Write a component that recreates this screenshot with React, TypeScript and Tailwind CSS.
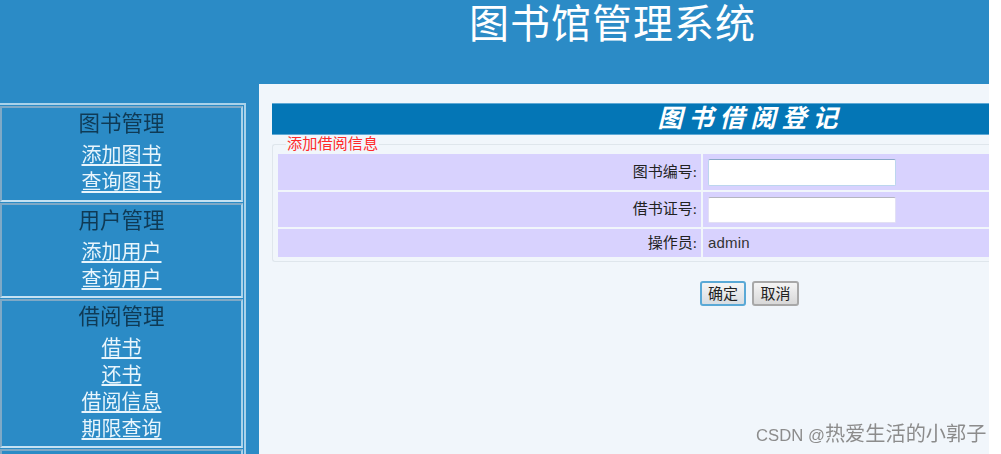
const font = { fontFamily: '"Liberation Serif","Noto Sans CJK SC",serif' };

function Group({ title, links, h }: { title: string; links: string[]; h: string }) {
  return (
    <div className={`${h} border-2 border-t-[#7fa9c6] border-l-[#7fa9c6] border-r-[#a9d2ea] border-b-[#c5e2f3] flex flex-col items-center pt-[2px] shrink-0`}>
      <div className="text-[21.5px] leading-[28px] text-[#0f3a55] mb-[4px]">{title}</div>
      {links.map((l) => (
        <a key={l} className="text-[20px] leading-[27px] text-[#e8f5fc] underline underline-offset-2">
          {l}
        </a>
      ))}
    </div>
  );
}

function Row({ label, h, children }: { label: string; h: string; children: React.ReactNode }) {
  return (
    <div className={`${h} flex gap-[2px]`}>
      <div className="w-[423px] bg-[#d8d2fe] flex items-center justify-end text-[15px] text-[#222] pr-[4px]">{label}:</div>
      <div className="flex-1 bg-[#d8d2fe] flex items-center pl-[5px]">{children}</div>
    </div>
  );
}

export default function App() {
  return (
    <div className="relative w-[1001px] h-[454px] bg-white overflow-hidden" style={font}>
      <div className="w-[989px] h-[454px] bg-[#2b8bc6] flex flex-col blur-[0.45px]">
        <div className="h-[84px] shrink-0 text-center text-white text-[40px] leading-[46px] pt-[2px] pl-[236px] tracking-[1px]">图书馆管理系统</div>
        <div className="flex flex-1 min-h-0">
          <aside className="w-[259px] shrink-0 pt-[19px] pr-[13px]">
            <div className="border-t-2 border-r-2 border-[#a9d2ea] pt-px pr-px flex flex-col gap-[1px] h-[360px] overflow-hidden">
              <Group h="h-[96px]" title="图书管理" links={["添加图书", "查询图书"]} />
              <Group h="h-[95px]" title="用户管理" links={["添加用户", "查询用户"]} />
              <Group h="h-[149px]" title="借阅管理" links={["借书", "还书", "借阅信息", "期限查询"]} />
              <Group h="h-[40px]" title="读者信息" links={[]} />
            </div>
          </aside>
          <main className="flex-1 bg-[#f1f6fb] pt-[19px] pl-[13px] min-w-0">
            <div className="h-[32px] bg-[#0476b6] border-y border-[#5fa9d5] text-white text-center font-bold italic text-[25px] leading-[29px] tracking-[6px] pl-[240px]">图书借阅登记</div>
            <div className="relative mt-[9px] border border-r-0 border-[#dfe6ec] rounded-l-[3px] h-[118px] pt-[9px] pl-[5px]">
              <div className="absolute left-[13px] -top-[10px] bg-[#f1f6fb] px-px text-[#ff2a2a] text-[15.2px] leading-[18px]">添加借阅信息</div>
              <div className="flex flex-col gap-[2px]">
                <Row h="h-[36px]" label="图书编号"><div className="w-[188px] h-[27px] bg-white rounded-[2px] border border-[#bcd6ee] border-t-[#8aa8c8]" /></Row>
                <Row h="h-[35px]" label="借书证号"><div className="w-[188px] h-[26px] bg-white rounded-[2px] border border-[#e2e0f4] border-t-[#b5b5c0]" /></Row>
                <Row h="h-[28px]" label="操作员"><span className="text-[15px] text-[#333] tracking-[0.2px]" style={{ fontFamily: '"Liberation Sans",sans-serif' }}>admin</span></Row>
              </div>
            </div>
            <div className="flex gap-[6px] mt-[19px] pl-[428px]">
              <button className="w-[46px] h-[25px] rounded-[3px] border-2 border-[#5aa9d6] bg-gradient-to-b from-[#f5f5f5] to-[#d8dde2] text-[15px] leading-[20px] text-[#222]">确定</button>
              <button className="w-[47px] h-[25px] rounded-[3px] border-2 border-[#a8a8a8] bg-gradient-to-b from-[#f5f5f5] to-[#d8d8d8] text-[15px] leading-[20px] text-[#222]">取消</button>
            </div>
          </main>
        </div>
      </div>
      <div className="absolute left-[756px] top-[422px] text-[16.7px] leading-[24px] text-[#8c8c8c] whitespace-nowrap blur-[0.3px]" style={{ fontFamily: '"Liberation Sans","Noto Sans CJK SC",sans-serif' }}>CSDN @<span className="text-[20.2px]">热爱生活的小郭子</span></div>
    </div>
  );
}
